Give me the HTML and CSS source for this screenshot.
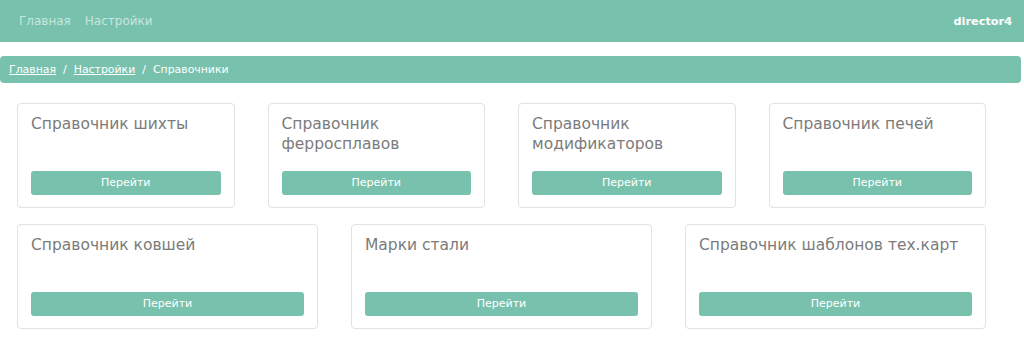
FILE: index.html
```html
<!DOCTYPE html>
<html lang="ru">
<head>
    <meta charset="UTF-8">
    <meta name="viewport" content="width=device-width, initial-scale=1.0">
    <title>Справочники</title>
    <link rel="stylesheet" href="styles.css">
</head>
<body>
    <nav class="navbar">
        <div class="nav-links">
            <a href="#" class="nav-link">Главная</a>
            <a href="#" class="nav-link">Настройки</a>
        </div>
        <span class="user-name">director4</span>
    </nav>

    <div class="breadcrumb">
        <a href="#">Главная</a>
        <span class="sep">/</span>
        <a href="#">Настройки</a>
        <span class="sep">/</span>
        <span>Справочники</span>
    </div>

    <div class="cards">
        <div class="card-row">
            <div class="card">
                <h5 class="card-title">Справочник шихты</h5>
                <a href="#" class="go-button">Перейти</a>
            </div>
            <div class="card">
                <h5 class="card-title">Справочник ферросплавов</h5>
                <a href="#" class="go-button">Перейти</a>
            </div>
            <div class="card">
                <h5 class="card-title">Справочник модификаторов</h5>
                <a href="#" class="go-button">Перейти</a>
            </div>
            <div class="card">
                <h5 class="card-title">Справочник печей</h5>
                <a href="#" class="go-button">Перейти</a>
            </div>
        </div>
        <div class="card-row">
            <div class="card">
                <h5 class="card-title">Справочник ковшей</h5>
                <a href="#" class="go-button">Перейти</a>
            </div>
            <div class="card">
                <h5 class="card-title">Марки стали</h5>
                <a href="#" class="go-button">Перейти</a>
            </div>
            <div class="card">
                <h5 class="card-title">Справочник шаблонов тех.карт</h5>
                <a href="#" class="go-button">Перейти</a>
            </div>
        </div>
    </div>
</body>
</html>
```

FILE: styles.css
```css
body {
    font-family: "DejaVu Sans", sans-serif;
    background-color: #ffffff;
    color: #888888;
    margin: 0;
}
.navbar {
    display: flex;
    justify-content: space-between;
    align-items: center;
    height: 42px;
    padding: 0 12px 0 19px;
    background-color: #78c2ad;
}
.nav-links {
    display: flex;
    gap: 14px;
}
.nav-link {
    color: rgba(255, 255, 255, 0.6);
    text-decoration: none;
    font-size: 12px;
}
.user-name {
    color: #ffffff;
    font-weight: bold;
    font-size: 11.3px;
}
.breadcrumb {
    display: flex;
    align-items: center;
    height: 27px;
    margin: 14px 3px 0 0;
    padding: 0 9px;
    background-color: #78c2ad;
    border-radius: 4px;
    color: #ffffff;
    font-size: 10.9px;
}
.breadcrumb a {
    color: #ffffff;
}
.breadcrumb .sep {
    margin: 0 7px;
}
.cards {
    width: 969px;
    margin: 20px 0 0 17px;
}
.card-row {
    display: flex;
    gap: 33px;
    margin-bottom: 16px;
}
.card {
    flex: 1;
    padding: 10px 13px 12px;
    border: 1px solid #e2e2e2;
    border-radius: 4px;
}
.card-title {
    margin: 0 0 17px;
    min-height: 40px;
    font-size: 15.5px;
    font-weight: normal;
    line-height: 20px;
    color: #7b7b7b;
}
.go-button {
    display: block;
    height: 24px;
    line-height: 24px;
    background-color: #78c2ad;
    border-radius: 3px;
    color: #ffffff;
    text-align: center;
    text-decoration: none;
    font-size: 11px;
}
```
